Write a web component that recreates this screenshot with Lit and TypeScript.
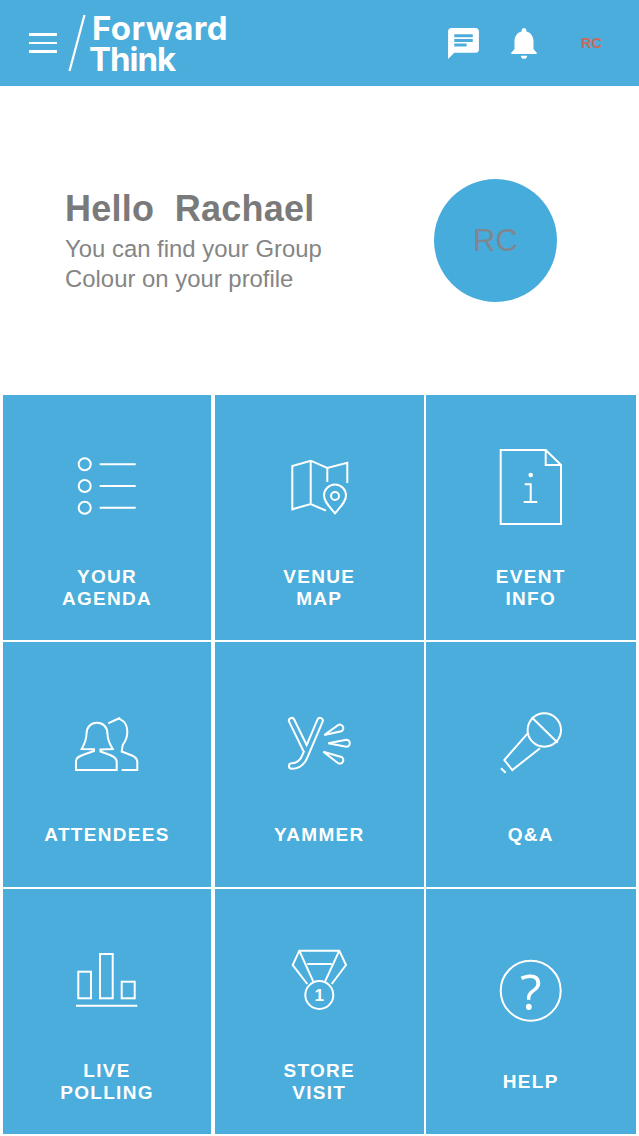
import { LitElement, html, svg, css } from 'lit';
import { customElement } from 'lit/decorators.js';

// icons are drawn in a shared 100x110 frame so each one sits at its own height in the tile
const tiles = [
  {
    lines: ['YOUR', 'AGENDA'],
    icon: svg`
      <circle cx="27.7" cy="29.3" r="6" />
      <circle cx="27.7" cy="51" r="6" />
      <circle cx="27.7" cy="72.7" r="6" />
      <path d="M42.7 29.3H78.7M42.7 51H78.7M42.7 72.7H78.7" />
    `,
  },
  {
    lines: ['VENUE', 'MAP'],
    icon: svg`
      <path d="M57 75.7L41.7 69L23.3 74.3V31L41.7 25.7L58.3 33L78.3 27.7V48M41.7 25.7V69M58.3 33V47" />
      <path d="M66 78.3C60 71 55 66.5 55 60.5A11 11 0 0 1 77 60.5C77 66.5 72 71 66 78.3Z" />
      <circle cx="66" cy="61" r="4" />
    `,
  },
  {
    lines: ['EVENT', 'INFO'],
    icon: svg`
      <path d="M19.7 15H64.7L80 30V89H19.7ZM64.7 15V30H80" />
      <path d="M43.7 49.3H49.7V67M42.7 67H56.3" />
      <circle class="fill" cx="49.7" cy="40" r="2.3" />
    `,
  },
  {
    lines: ['ATTENDEES'],
    icon: svg`
      <path d="M19 88V79C19 75 23 74 27 72.5L37 69V67.3L24.7 67C28 61 29.5 57 29.5 52C29.5 45 34 40.7 40 40.7C46 40.7 50.5 45 50.5 52C50.5 57 52 61 55.7 67L43.5 67.5V69.5L53 73C57 74.5 59.7 76 59.7 80V88Z" />
      <path d="M51.3 41.3C55 39.5 58 38 62.3 36.3C63.5 38 66 38.5 67.5 40.5C69.5 43 70.3 46 70.3 50C70.3 56 68 60 65.7 63L64.7 69.5L75 73.5C78.5 75 80.3 76.5 80.3 80V88H64.7" />
    `,
  },
  {
    lines: ['YAMMER'],
    icon: svg`
      <path class="thick" d="M22.7 38.7L37 68M51 38.7L36 74C34 79 30 84 22.7 84" />
      <path class="inner" d="M22.7 38.7L37 68M51 38.7L36 74C34 79 30 84 22.7 84" />
      <path transform="translate(55.3 53) rotate(-24)" d="M0 0L17 -3.5A3.5 3.5 0 0 1 17 3.5Z" />
      <path transform="translate(59.3 61.3)" d="M0 0L18 -3.5A3.5 3.5 0 0 1 18 3.5Z" />
      <path transform="translate(54.3 69.7) rotate(27)" d="M0 0L18.5 -3.5A3.5 3.5 0 0 1 18.5 3.5Z" />
    `,
  },
  {
    lines: ['Q&A'],
    icon: svg`
      <circle cx="63.3" cy="48" r="16.7" />
      <path d="M50.7 35.3L76.7 60.7M46.7 51.3L23.3 78L31.3 88L59 66.3M20 86.3L24.7 90.7" />
    `,
  },
  {
    lines: ['LIVE', 'POLLING'],
    icon: svg`
      <rect x="21.3" y="42.7" width="12.7" height="26.6" />
      <rect x="43" y="25" width="12.7" height="44.3" />
      <rect x="64.7" y="52.7" width="13" height="16.6" />
      <path d="M19 76.7H80.3" />
    `,
  },
  {
    lines: ['STORE', 'VISIT'],
    icon: svg`
      <circle cx="50.3" cy="66" r="14" />
      <path d="M38.3 55L23.7 36L30.3 21.7H70.3L77 36L62.7 55M30.3 21.7L44.3 52.7M70.3 21.7L56 52.7M38.3 35H62.7" />
      <text class="num" x="50.3" y="72" text-anchor="middle">1</text>
    `,
  },
  {
    lines: ['HELP'],
    icon: svg`
      <circle cx="49.7" cy="61.7" r="30" />
      <text class="qm" x="49.7" y="81" text-anchor="middle">?</text>
    `,
  },
];

@customElement('app-root')
export class AppRoot extends LitElement {
  static styles = css`
    :host {
      display: block;
      background: #fff;
      font-family: 'Liberation Sans', Arial, sans-serif;
    }

    .bar {
      display: flex;
      align-items: center;
      height: 86px;
      padding-left: 29px;
      background: #4aaddb;
      color: #fff;
    }
    .burger {
      display: flex;
      flex-direction: column;
      gap: 6px;
      width: 28px;
    }
    .burger span {
      height: 2.4px;
      background: #fff;
    }
    .slash {
      margin-left: 11px;
      flex: none;
    }
    .logo {
      margin: 1px 0 0 6px;
      font-family: Inter, sans-serif;
      font-weight: 700;
      font-size: 33px;
      line-height: 31px;
    }
    .forward {
      letter-spacing: 0.45px;
    }
    .think {
      margin-left: -3px;
      letter-spacing: -1px;
    }
    .actions {
      display: flex;
      align-items: center;
      margin-left: auto;
    }
    .chat {
      margin-right: 23px;
    }
    .initials {
      margin: 0 37px 0 38px;
      font-size: 14.5px;
      font-weight: 700;
      color: #c96a5c;
    }

    .hello {
      display: flex;
      align-items: center;
      justify-content: space-between;
      height: 309px;
      padding: 0 82px 0 65px;
    }
    .intro {
      padding-top: 2px;
    }
    h1 {
      margin: 0 0 3.5px;
      font-size: 36px;
      line-height: 42px;
      font-weight: 700;
      letter-spacing: 0.25px;
      color: #7a7a7a;
      white-space: pre;
    }
    p {
      margin: 0;
      font-size: 23.9px;
      line-height: 30.5px;
      color: #858585;
    }
    .avatar {
      display: flex;
      align-items: center;
      justify-content: center;
      width: 123px;
      height: 123px;
      border-radius: 50%;
      background: #46acdc;
      font-size: 31px;
      color: #7e878e;
    }

    .grid {
      display: grid;
      grid-template-columns: repeat(3, 209.5px);
      grid-auto-rows: 245px;
      gap: 2px;
      padding: 0 0 2px 3px;
    }
    .tile {
      display: flex;
      flex-direction: column;
      align-items: center;
      padding-top: 40px;
      box-sizing: border-box;
      background: #4aaddb;
      color: #fff;
    }
    .tile:nth-child(3n + 1) {
      margin-right: 1.5px;
    }
    .tile svg {
      flex: none;
      fill: none;
      stroke: #fff;
      stroke-width: 2;
    }
    .tile svg .fill {
      fill: #fff;
      stroke: none;
    }
    .tile svg .thick {
      stroke-width: 7.5;
      stroke-linecap: round;
      stroke-linejoin: round;
    }
    .tile svg .inner {
      stroke: #4aaddb;
      stroke-width: 3.5;
      stroke-linecap: round;
      stroke-linejoin: round;
    }
    .tile svg .num {
      fill: #fff;
      stroke: none;
      font: 700 17px 'Liberation Sans', sans-serif;
    }
    .tile svg .qm {
      fill: #fff;
      stroke: none;
      font: 400 50px 'Open Sans', sans-serif;
    }
    .label {
      display: flex;
      flex-direction: column;
      align-items: center;
      justify-content: center;
      height: 44px;
      margin-top: 20.5px;
      font-size: 19px;
      line-height: 22px;
      font-weight: 700;
      letter-spacing: 1.3px;
    }
  `;

  render() {
    return html`
      <header class="bar">
        <div class="burger"><span></span><span></span><span></span></div>
        <svg class="slash" width="18" height="58" viewBox="0 0 18 58">
          <path d="M16.5 1L1.5 57" stroke="#fff" stroke-width="2.2" />
        </svg>
        <div class="logo">
          <div class="forward">Forward</div>
          <div class="think">Think</div>
        </div>
        <div class="actions">
          <svg class="chat" width="37" height="37" viewBox="0 0 24 24" fill="#fff">
            <path d="M20 2H4c-1.1 0-2 .9-2 2v18l4-4h14c1.1 0 2-.9 2-2V4c0-1.1-.9-2-2-2zM6 9h12v2H6V9zm8 5H6v-2h8v2zm4-6H6V6h12v2z" />
          </svg>
          <svg width="38" height="38" viewBox="0 0 24 24" fill="#fff">
            <path d="M12 22c1.1 0 2-.9 2-2h-4c0 1.1.89 2 2 2zm6-6v-5c0-3.07-1.64-5.64-4.5-6.32V4c0-.83-.67-1.5-1.5-1.5s-1.5.67-1.5 1.5v.68C7.63 5.36 6 7.92 6 11v5l-2 2v1h16v-1l-2-2z" />
          </svg>
          <span class="initials">RC</span>
        </div>
      </header>

      <section class="hello">
        <div class="intro">
          <h1>Hello  Rachael</h1>
          <p>You can find your Group<br />Colour on your profile</p>
        </div>
        <div class="avatar">RC</div>
      </section>

      <nav class="grid">
        ${tiles.map(
          (t) => html`
            <div class="tile">
              <svg width="100" height="110" viewBox="0 0 100 110">${t.icon}</svg>
              <div class="label">${t.lines.map((l) => html`<span>${l}</span>`)}</div>
            </div>
          `
        )}
      </nav>
    `;
  }
}
